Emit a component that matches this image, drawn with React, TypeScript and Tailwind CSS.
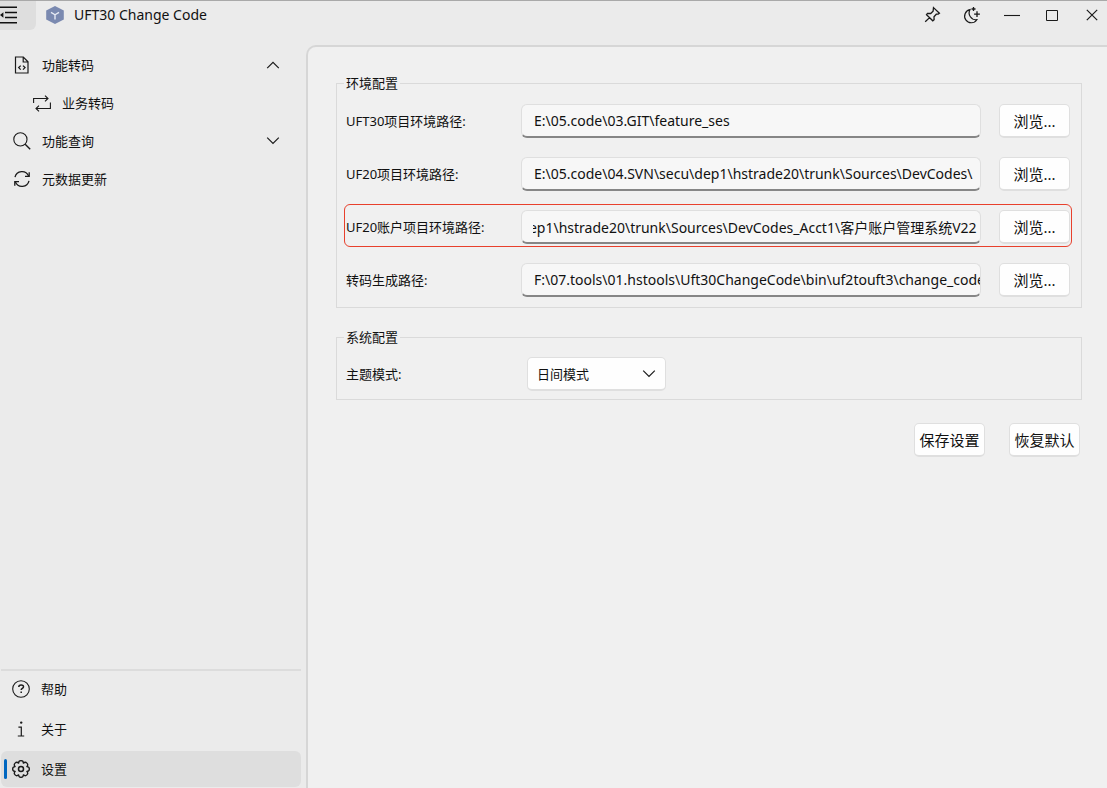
import { useEffect, useRef } from "react";
import type { ReactNode } from "react";

function Icon({ size = 18, children }: { size?: number; children: ReactNode }) {
  return (
    <svg
      width={size}
      height={size}
      viewBox={`0 0 ${size} ${size}`}
      fill="none"
      stroke="#1a1a1a"
      strokeWidth="1.1"
      aria-hidden="true"
      className="shrink-0"
    >
      {children}
    </svg>
  );
}

const MenuIcon = () => (
  <svg width="18" height="18" viewBox="0 0 18 18" fill="none" stroke="#111" strokeWidth="1.6" aria-hidden="true">
    <path d="M0 1.2h17M5 6.5h12M5 11.5h12M0 16.8h17" />
    <path d="M0 9l3.4-2.8v5.6z" fill="#111" stroke="none" />
  </svg>
);

const LogoIcon = () => (
  <svg width="18" height="18" viewBox="0 0 18 18" aria-hidden="true" className="shrink-0">
    <path d="M9 0l8.8 4.4v9.2L9 18 .2 13.6V4.4z" fill="#7a89b0" />
    <path d="M5 6.4l4 2.4 4-2.4M9 8.8v4.8" fill="none" stroke="#e6eaf4" strokeWidth="1.4" />
  </svg>
);

const PinIcon = () => (
  <Icon>
    <path strokeWidth="1.3" d="M10.5 1.6l5.9 5.6-1.2.9-1.9.1-2.3 2.5.1 3.1-1.3 1L3.5 8.7l1-1.3 3.2.1 2.4-2.4zM6.6 11.6l-4.4 4.2" />
  </Icon>
);

const MoonIcon = () => (
  <Icon>
    <path strokeWidth="1.2" d="M6.9 3.7a6.6 6.6 0 1 0 6.9 10A6.9 6.9 0 0 1 6.9 3.7z" />
    <path strokeWidth="1.3" d="M10.5 1v4M8.500 3h4M14 5.300v5.800M11.100 8.200h5.800" />
  </Icon>
);

const MinimizeIcon = () => (
  <Icon>
    <path d="M1 9.5h16" />
  </Icon>
);

const MaximizeIcon = () => (
  <Icon>
    <path strokeWidth="1" d="M3.5 4.5h11v10h-11z" />
  </Icon>
);

const CloseIcon = () => (
  <Icon>
    <path strokeWidth="1.2" d="M3.8 3.8l10.4 10.4M14.2 3.8L3.8 14.2" />
  </Icon>
);

const FileCodeIcon = () => (
  <Icon>
    <path strokeWidth="1.2" d="M2.5 1h7.8l4.7 4.8V17H2.5zM10.2 1v5H15" />
    <path strokeWidth="1.3" d="M7.7 9.6l-2 2 2 2M10 9.6l2 2-2 2" />
  </Icon>
);

const SwapIcon = () => (
  <Icon>
    <path d="M.6 9V4.5H15M12 1.6l3 2.9-3 2.9M17.4 8.6v5.9H3M6 11.6l-3 2.9 3 2.9" />
  </Icon>
);

const SearchIcon = () => (
  <Icon>
    <circle cx="7.4" cy="7.4" r="6.6" />
    <path strokeWidth="1.4" d="M12.2 12.2l5 5" />
  </Icon>
);

const RefreshIcon = () => (
  <Icon>
    <path strokeWidth="1.3" d="M2 7.2A7.2 7.2 0 0 1 15.6 6M16 10.8A7.2 7.2 0 0 1 2.4 12" />
    <path strokeWidth="1.3" d="M16.2 2.2v4.2H12M1.8 15.8v-4.2H6" />
  </Icon>
);

const HelpIcon = () => (
  <Icon>
    <circle cx="9" cy="9" r="8.3" />
    <path strokeWidth="1.5" d="M6.8 7c0-2.6 4.7-2.5 4.7-.2 0 1.6-2.3 1.5-2.3 3.2M9.2 11.6v1.5" />
  </Icon>
);

const InfoIcon = () => (
  <Icon>
    <path strokeWidth="1.2" d="M6.4 7.2h2.9V16M5.8 16h6.4" />
    <circle cx="9.2" cy="2.6" r="1.2" fill="#1a1a1a" stroke="none" />
  </Icon>
);

const GearIcon = () => (
  <Icon>
    <path
      strokeWidth="1.3"
      strokeLinejoin="round"
      d="M6.59 3.18C6.6 -.2 11.4 -.2 11.41 3.18C13.81 .8 17.2 4.19 14.82 6.59C18.2 6.6 18.2 11.4 14.82 11.41C17.2 13.81 13.81 17.2 11.41 14.82C11.4 18.2 6.6 18.2 6.59 14.82C4.19 17.2 .8 13.81 3.18 11.41C-.2 11.4 -.2 6.6 3.18 6.59C.8 4.19 4.19 .8 6.59 3.18z"
    />
    <circle cx="9" cy="9" r="2.5" strokeWidth="1.5" />
  </Icon>
);

const ChevronUp = () => (
  <Icon size={14}>
    <path strokeWidth="1.2" d="M1.2 10.2L7 4.4l5.8 5.8" />
  </Icon>
);

const ChevronDown = () => (
  <Icon size={14}>
    <path strokeWidth="1.2" d="M1.2 3.6L7 9.4l5.8-5.8" />
  </Icon>
);

function NavItem({ icon, label, trailing, nested }: { icon: ReactNode; label: string; trailing?: ReactNode; nested?: boolean }) {
  return (
    <li>
      <button
        type="button"
        className={`flex h-[38px] w-full items-center gap-[11px] pr-[26px] text-left ${nested ? "pl-[33px]" : "pl-[13px]"}`}
      >
        {icon}
        <span className="flex-1">{label}</span>
        {trailing}
      </button>
    </li>
  );
}

function FooterItem({ icon, label, active }: { icon: ReactNode; label: string; active?: boolean }) {
  return (
    <li>
      <button
        type="button"
        aria-current={active ? "page" : undefined}
        className={`flex h-9 w-full items-center rounded-md pl-[3px] text-left ${active ? "bg-[#dedede]" : ""}`}
      >
        <span className={`mr-[5px] h-5 w-[3px] rounded-full ${active ? "bg-[#0067c0]" : ""}`} />
        {icon}
        <span className="ml-[11px]">{label}</span>
      </button>
    </li>
  );
}

const buttonStyle =
  "h-[34px] w-[71px] shrink-0 whitespace-nowrap rounded-[5px] border border-b-2 border-[#dfdfdf] bg-[#fefefe] text-[15px] leading-5";

interface PathRowProps {
  id: string;
  label: string;
  value: string;
  highlighted?: boolean;
}

function PathRow({ id, label, value, highlighted }: PathRowProps) {
  const ref = useRef<HTMLInputElement>(null);

  // A highlighted path shows its tail, where the project folder is.
  useEffect(() => {
    if (highlighted && ref.current) {
      ref.current.scrollLeft = ref.current.scrollWidth;
    }
  }, [highlighted]);

  return (
    <div
      className={`flex h-[43px] items-center rounded-md border pt-[3px] pl-px ${highlighted ? "border-[#e8402c]" : "border-transparent"}`}
    >
      <label htmlFor={id} className="w-[175px] shrink-0">
        {label}
      </label>
      <input
        ref={ref}
        id={id}
        type="text"
        defaultValue={value}
        className={`h-[34px] min-w-0 flex-1 rounded-md border border-b-2 border-[#dfdfdf] border-b-[#868686] bg-[#f7f7f7] text-sm outline-none ${highlighted ? "pl-[11px] pr-[3px]" : "pl-3"}`}
      />
      <button type="button" className={`ml-[18px] mr-px ${buttonStyle}`}>
        浏览...
      </button>
    </div>
  );
}

const paths: PathRowProps[] = [
  { id: "uft30", label: "UFT30项目环境路径:", value: "E:\\05.code\\03.GIT\\feature_ses" },
  { id: "uf20", label: "UF20项目环境路径:", value: "E:\\05.code\\04.SVN\\secu\\dep1\\hstrade20\\trunk\\Sources\\DevCodes\\" },
  {
    id: "uf20-account",
    label: "UF20账户项目环境路径:",
    value: "E:\\05.code\\04.SVN\\secu\\dep1\\hstrade20\\trunk\\Sources\\DevCodes_Acct1\\客户账户管理系统V22",
    highlighted: true,
  },
  { id: "output", label: "转码生成路径:", value: "F:\\07.tools\\01.hstools\\Uft30ChangeCode\\bin\\uf2touft3\\change_code" },
];

const windowButtons = [
  { name: "置顶", icon: <PinIcon /> },
  { name: "切换主题", icon: <MoonIcon /> },
  { name: "最小化", icon: <MinimizeIcon /> },
  { name: "最大化", icon: <MaximizeIcon /> },
  { name: "关闭", icon: <CloseIcon /> },
];

export default function App() {
  return (
    <div className="flex min-h-screen flex-col border-t border-[#a9a9a9] bg-[#ebebeb] font-['Noto_Sans','Noto_Sans_CJK_SC',sans-serif] text-[13px] leading-5 text-[#111]">
      <header className="flex h-11 items-start">
        <button type="button" aria-label="菜单" className="flex h-[29px] w-9 items-center rounded-br-md bg-[#dedede] pb-px">
          <MenuIcon />
        </button>
        <span className="ml-[10px] flex h-7 flex-1 items-center gap-[10px]">
          <LogoIcon />
          <h1 className="text-sm">UFT30 Change Code</h1>
        </span>
        <div className="flex gap-[10px]">
          {windowButtons.map((b) => (
            <button key={b.name} type="button" aria-label={b.name} className="flex h-7 w-[30px] items-center justify-center">
              {b.icon}
            </button>
          ))}
        </div>
      </header>

      <div className="flex flex-1">
        <nav className="flex w-[306px] shrink-0 flex-col pt-px">
          <ul className="flex-1">
            <NavItem icon={<FileCodeIcon />} label="功能转码" trailing={<ChevronUp />} />
            <NavItem icon={<SwapIcon />} label="业务转码" nested />
            <NavItem icon={<SearchIcon />} label="功能查询" trailing={<ChevronDown />} />
            <NavItem icon={<RefreshIcon />} label="元数据更新" />
          </ul>
          <ul className="mr-[5px] ml-px flex flex-col gap-1 border-t-2 border-[#dcdcdc] pb-px">
            <FooterItem icon={<HelpIcon />} label="帮助" />
            <FooterItem icon={<InfoIcon />} label="关于" />
            <FooterItem icon={<GearIcon />} label="设置" active />
          </ul>
        </nav>

        <main className="min-w-0 flex-1 rounded-tl-[10px] border-t-2 border-l-2 border-[#d6d6d6] bg-[#f0f0f0] pt-[26px] pr-[25px] pl-7">
          <fieldset className="min-w-0 border border-[#dadada] pt-[5px] pr-[9px] pb-[7px] pl-[7px]">
            <legend className="px-0.5">环境配置</legend>
            <div className="flex flex-col gap-[10px]">
              {paths.map((p) => (
                <PathRow key={p.id} {...p} />
              ))}
            </div>
          </fieldset>

          <fieldset className="mt-[19px] min-w-0 border border-[#dadada] pt-[10px] pr-[9px] pb-2 pl-[9px]">
            <legend className="-ml-0.5 px-0.5">系统配置</legend>
            <div className="flex items-center">
              <label htmlFor="theme" className="w-[181px] shrink-0">
                主题模式:
              </label>
              <div className="grid w-[139px] items-center">
                <select
                  id="theme"
                  className="col-start-1 row-start-1 h-[34px] appearance-none rounded-[5px] border border-b-2 border-[#dfdfdf] bg-[#fefefe] pl-[9px] outline-none"
                >
                  <option>日间模式</option>
                  <option>夜间模式</option>
                </select>
                <span className="pointer-events-none col-start-1 row-start-1 mr-[10px] flex justify-self-end">
                  <ChevronDown />
                </span>
              </div>
            </div>
          </fieldset>

          <div className="mt-[23px] mr-0.5 flex justify-end gap-6">
            <button type="button" className={buttonStyle}>
              保存设置
            </button>
            <button type="button" className={buttonStyle}>
              恢复默认
            </button>
          </div>
        </main>
      </div>
    </div>
  );
}
